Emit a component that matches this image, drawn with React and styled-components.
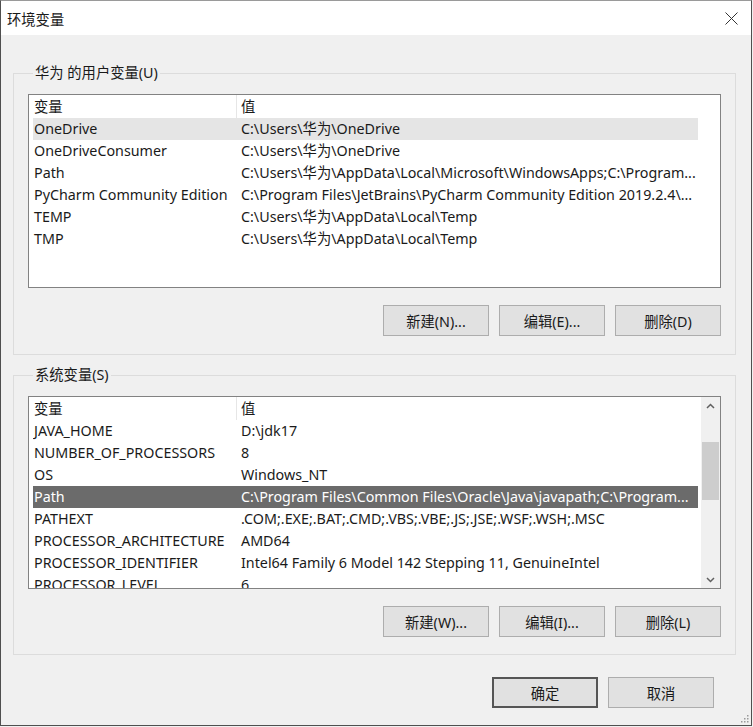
import React from 'react';
import styled, { createGlobalStyle } from 'styled-components';

const GlobalStyle = createGlobalStyle`
  html, body {
    margin: 0;
    padding: 0;
    background: #f0f0f0;
  }
  body {
    font-family: "Noto Sans", "Noto Sans CJK SC", sans-serif;
    color: #1a1a1a;
  }
`;

const Window = styled.div`
  position: relative;
  width: 752px;
  height: 726px;
  box-sizing: border-box;
  border: 1px solid #4f4f4f;
  border-top-color: #9a9a9a;
  background: #f0f0f0;
  display: flex;
  flex-direction: column;
  font-size: 14.3px;
`;

const TitleBar = styled.div`
  height: 34px;
  background: #fff;
  display: flex;
  align-items: center;
  justify-content: space-between;
  padding: 0 13px 0 6px;
  font-size: 14.3px;
`;

const CloseIcon = styled.svg`
  width: 13px;
  height: 13px;
  display: block;
`;

const Body = styled.div`
  padding: 0 15px 0 12px;
  display: flex;
  flex-direction: column;
`;

const Group = styled.fieldset`
  margin: ${p => p.$top}px 0 0 0;
  padding: 0 14px ${p => p.$bottom}px 14px;
  border: 1px solid #dcdcdc;
  min-width: 0;
`;

const Legend = styled.legend`
  margin-left: 5px;
  padding: 0 2px;
  line-height: 19px;
  padding-bottom: 1px;
  font-size: 14.3px;
`;

const ListBox = styled.div`
  margin-top: 11px;
  height: ${p => p.$height}px;
  box-sizing: border-box;
  border: 1px solid #828282;
  background: #fff;
  display: flex;
  overflow: hidden;
`;

const Rows = styled.div`
  flex: 1;
  min-width: 0;
  overflow: hidden;
`;

const HeaderRow = styled.div`
  display: flex;
  height: 23px;
  line-height: 23px;
  width: 665px;
  margin-left: 4px;
`;

const Row = styled.div`
  display: flex;
  height: 22px;
  line-height: 21px;
  width: 665px;
  margin-left: 4px;
  white-space: nowrap;
  background: ${p => (p.$state === 'selected' ? '#6b6b6b' : p.$state === 'hover' ? '#e5e5e5' : 'transparent')};
  color: ${p => (p.$state === 'selected' ? '#fff' : '#1a1a1a')};
`;

const NameCell = styled.div`
  width: 204px;
  flex: none;
  box-sizing: border-box;
  padding-left: 1px;
  overflow: hidden;
  border-right: ${p => (p.$header ? '1px solid #e6e6e6' : 'none')};
`;

const ValueCell = styled.div`
  flex: 1;
  padding-left: 4px;
  overflow: hidden;
  white-space: nowrap;
`;

const ScrollBar = styled.div`
  width: 19px;
  flex: none;
  background: #f0f0f0;
  display: flex;
  flex-direction: column;
`;

const ArrowBtn = styled.div`
  height: 17px;
  flex: none;
  display: flex;
  align-items: center;
  justify-content: center;
`;

const Track = styled.div`
  flex: 1;
  display: flex;
  flex-direction: column;
  align-items: center;
`;

const Thumb = styled.div`
  margin-top: ${p => p.$offset}px;
  width: 17px;
  height: ${p => p.$size}px;
  background: #cdcdcd;
`;

const ButtonRow = styled.div`
  margin-top: 17px;
  display: flex;
  justify-content: flex-end;
  gap: 10px;
`;

const Button = styled.button`
  width: 106px;
  height: 31px;
  box-sizing: border-box;
  background: #e1e1e1;
  border: ${p => (p.$default ? '2px solid #555' : '1px solid #adadad')};
  font-family: inherit;
  font-size: 14.3px;
  color: #1a1a1a;
  padding: 0;
`;

const Footer = styled.div`
  margin-top: 22px;
  padding-right: 22px;
  display: flex;
  justify-content: flex-end;
  gap: 10px;
`;

const Grip = styled.svg`
  position: absolute;
  right: 2px;
  bottom: 2px;
  width: 10px;
  height: 10px;
`;

const Chevron = ({ up }) => (
  <svg width="9" height="6" viewBox="0 0 9 6">
    <path
      d={up ? 'M1 5 L4.5 1.5 L8 5' : 'M1 1 L4.5 4.5 L8 1'}
      fill="none"
      stroke="#606060"
      strokeWidth="1.5"
    />
  </svg>
);

const userVars = [
  ['OneDrive', 'C:\\Users\\华为\\OneDrive', 'hover'],
  ['OneDriveConsumer', 'C:\\Users\\华为\\OneDrive'],
  ['Path', 'C:\\Users\\华为\\AppData\\Local\\Microsoft\\WindowsApps;C:\\Program...'],
  ['PyCharm Community Edition', 'C:\\Program Files\\JetBrains\\PyCharm Community Edition 2019.2.4\\...'],
  ['TEMP', 'C:\\Users\\华为\\AppData\\Local\\Temp'],
  ['TMP', 'C:\\Users\\华为\\AppData\\Local\\Temp'],
];

const sysVars = [
  ['JAVA_HOME', 'D:\\jdk17'],
  ['NUMBER_OF_PROCESSORS', '8'],
  ['OS', 'Windows_NT'],
  ['Path', 'C:\\Program Files\\Common Files\\Oracle\\Java\\javapath;C:\\Program...', 'selected'],
  ['PATHEXT', '.COM;.EXE;.BAT;.CMD;.VBS;.VBE;.JS;.JSE;.WSF;.WSH;.MSC'],
  ['PROCESSOR_ARCHITECTURE', 'AMD64'],
  ['PROCESSOR_IDENTIFIER', 'Intel64 Family 6 Model 142 Stepping 11, GenuineIntel'],
  ['PROCESSOR_LEVEL', '6'],
];

const VarRows = ({ items }) => (
  <Rows>
    <HeaderRow>
      <NameCell $header>变量</NameCell>
      <ValueCell>值</ValueCell>
    </HeaderRow>
    {items.map(([name, value, state]) => (
      <Row key={name} $state={state}>
        <NameCell>{name}</NameCell>
        <ValueCell>{value}</ValueCell>
      </Row>
    ))}
  </Rows>
);

export default function App() {
  return (
    <>
      <GlobalStyle />
      <Window>
        <TitleBar>
          <span>环境变量</span>
          <CloseIcon viewBox="0 0 13 13">
            <path d="M0.5 0.5 L12.5 12.5 M12.5 0.5 L0.5 12.5" stroke="#333" strokeWidth="1" />
          </CloseIcon>
        </TitleBar>
        <Body>
          <Group $top={28} $bottom={18}>
            <Legend>华为 的用户变量(U)</Legend>
            <ListBox $height={194}>
              <VarRows items={userVars} />
            </ListBox>
            <ButtonRow>
              <Button>新建(N)...</Button>
              <Button>编辑(E)...</Button>
              <Button>删除(D)</Button>
            </ButtonRow>
          </Group>
          <Group $top={10} $bottom={17}>
            <Legend>系统变量(S)</Legend>
            <ListBox $height={193}>
              <VarRows items={sysVars} />
              <ScrollBar>
                <ArrowBtn><Chevron up /></ArrowBtn>
                <Track>
                  <Thumb $offset={28} $size={58} />
                </Track>
                <ArrowBtn><Chevron /></ArrowBtn>
              </ScrollBar>
            </ListBox>
            <ButtonRow>
              <Button>新建(W)...</Button>
              <Button>编辑(I)...</Button>
              <Button>删除(L)</Button>
            </ButtonRow>
          </Group>
          <Footer>
            <Button $default>确定</Button>
            <Button>取消</Button>
          </Footer>
        </Body>
        <Grip viewBox="0 0 10 10">
          {[[8, 2], [8, 5], [5, 5], [8, 8], [5, 8], [2, 8]].map(([x, y]) => (
            <rect key={`${x}-${y}`} x={x} y={y} width="1.5" height="1.5" fill="#9a9a9a" />
          ))}
        </Grip>
      </Window>
    </>
  );
}
